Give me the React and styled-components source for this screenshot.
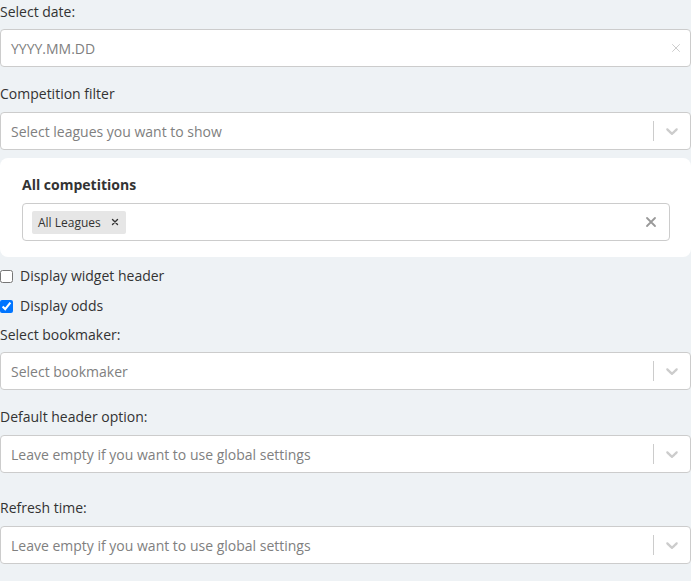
import styled, { createGlobalStyle } from 'styled-components'

const Global = createGlobalStyle`
  html, body {
    margin: 0;
    padding: 0;
    background: #eef2f5;
  }
  body {
    font-family: 'Open Sans', 'Noto Sans', sans-serif;
    font-size: 14px;
    color: #333;
  }
`

const Page = styled.div`
  display: flex;
  flex-direction: column;
  width: 691px;
  padding-top: 2px;
`

const Label = styled.div`
  line-height: 20px;
  margin-top: ${({ $top }) => $top ?? 0}px;
  margin-bottom: ${({ $gap }) => $gap ?? 8}px;
`

const Control = styled.div`
  box-sizing: border-box;
  height: 38px;
  width: ${({ $inset }) => ($inset ? 'auto' : '691px')};
  display: flex;
  align-items: center;
  background: #fff;
  border: 1px solid #ccc;
  border-radius: 4px;
`

const Value = styled.div`
  flex: 1;
  padding: 0 10px;
  color: #808080;
  white-space: nowrap;
  overflow: hidden;
`

const Separator = styled.span`
  width: 1px;
  height: 20px;
  background: #ccc;
`

const Indicator = styled.span`
  display: flex;
  align-items: center;
  justify-content: center;
  padding: 8px;
  margin-right: ${({ $shift }) => $shift ?? 0}px;
  color: ${({ $dark }) => ($dark ? '#999' : '#ccc')};
`

const Panel = styled.section`
  margin-top: 8px;
  background: #fff;
  border-radius: 8px;
  padding: 17px 21px 16px 22px;
`

const PanelTitle = styled.div`
  font-weight: 700;
  line-height: 20px;
  margin-bottom: 8px;
`

const Tags = styled.div`
  flex: 1;
  display: flex;
  padding: 0 9px;
`

const Tag = styled.span`
  display: inline-flex;
  align-items: center;
  height: 23px;
  background: #e6e6e6;
  border-radius: 2px;
  font-size: 12px;
  color: #333;
  padding: 0 6px 0 6px;
  gap: 9px;
`

const TagRemove = styled.span`
  display: flex;
  align-items: center;
  color: #333;
`

const CheckRow = styled.label`
  display: flex;
  align-items: center;
  gap: 7px;
  line-height: 20px;
  margin-top: ${({ $top }) => $top}px;
  input {
    margin: 0;
    width: 13px;
    height: 13px;
  }
`

const Cross = ({ size = 14, stroke = 1.5 }) => (
  <svg width={size} height={size} viewBox="0 0 20 20" fill="none">
    <path d="M5 5l10 10M15 5L5 15" stroke="currentColor" strokeWidth={stroke * 1.4} strokeLinecap="round" />
  </svg>
)

const Chevron = () => (
  <svg width="20" height="20" viewBox="0 0 20 20" fill="currentColor">
    <path d="M4.516 7.548c0.436-0.446 1.043-0.481 1.576 0l3.908 3.747 3.908-3.747c0.533-0.481 1.141-0.446 1.574 0 0.436 0.445 0.408 1.197 0 1.615-0.406 0.418-4.695 4.502-4.695 4.502-0.217 0.223-0.502 0.335-0.787 0.335s-0.57-0.112-0.789-0.335c0 0-4.287-4.084-4.695-4.502s-0.436-1.17 0-1.615z" />
  </svg>
)

const SelectBox = ({ placeholder }) => (
  <Control>
    <Value>{placeholder}</Value>
    <Separator />
    <Indicator>
      <Chevron />
    </Indicator>
  </Control>
)

export default function App() {
  return (
    <>
      <Global />
      <Page>
        <Label $gap={7}>Select date:</Label>
        <Control>
          <Value>YYYY.MM.DD</Value>
          <Indicator $shift={-1}>
            <Cross size={14} stroke={1} />
          </Indicator>
        </Control>

        <Label $top={17}>Competition filter</Label>
        <SelectBox placeholder="Select leagues you want to show" />

        <Panel>
          <PanelTitle>All competitions</PanelTitle>
          <Control $inset>
            <Tags>
              <Tag>
                All Leagues
                <TagRemove>
                  <Cross size={10} stroke={2} />
                </TagRemove>
              </Tag>
            </Tags>
            <Indicator $dark $shift={2}>
              <Cross size={16} stroke={1.6} />
            </Indicator>
          </Control>
        </Panel>

        <CheckRow $top={9}>
          <input type="checkbox" />
          Display widget header
        </CheckRow>
        <CheckRow $top={10}>
          <input type="checkbox" defaultChecked />
          Display odds
        </CheckRow>

        <Label $top={9} $gap={7}>Select bookmaker:</Label>
        <SelectBox placeholder="Select bookmaker" />

        <Label $top={17} $gap={8}>Default header option:</Label>
        <SelectBox placeholder="Leave empty if you want to use global settings" />

        <Label $top={25} $gap={8}>Refresh time:</Label>
        <SelectBox placeholder="Leave empty if you want to use global settings" />
      </Page>
    </>
  )
}
